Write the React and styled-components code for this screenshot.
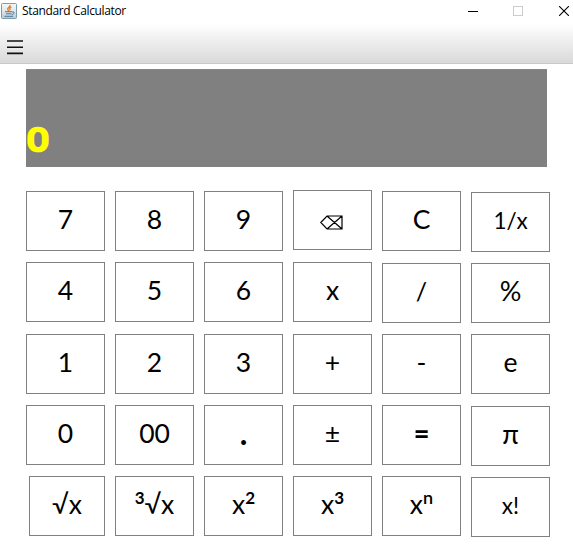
import React from "react";
import styled, { createGlobalStyle } from "styled-components";

const GlobalStyle = createGlobalStyle`
  * { box-sizing: border-box; }
  body { margin: 0; background: #fff; overflow: hidden; }
`;

const Window = styled.main`
  display: flex;
  flex-direction: column;
  width: 573px;
  height: 556px;
  background: #fff;
  color: #000;
  font-family: Lato, sans-serif;
`;

const TitleBar = styled.header`
  display: flex;
  align-items: center;
  height: 24px;
  padding: 0 4px 2px 1px;
`;

const Title = styled.h1`
  flex: 1;
  margin: 0 0 0 5px;
  font: 400 12px/18px "Open Sans", sans-serif;
  letter-spacing: -0.36px;
`;

const WindowControls = styled.div`
  display: flex;
  gap: 35px;
`;

const WindowControl = styled.button`
  display: flex;
  width: 10px;
  height: 10px;
  padding: 0;
  border: 0;
  background: none;

  &:last-child { margin-left: 1px; }
`;

const Toolbar = styled.nav`
  display: flex;
  align-items: flex-start;
  height: 40px;
  padding: 16px 0 0 7px;
  background: linear-gradient(#fff, #dadada 38px);
  border-bottom: 1px solid #c8c8c8;
`;

const MenuButton = styled.button`
  display: flex;
  padding: 0;
  border: 0;
  background: none;
`;

const Display = styled.output`
  display: flex;
  align-items: flex-end;
  width: 521px;
  height: 98px;
  margin: 5px 0 0 26px;
  background: #808080;
  border-top: 1px solid #7b8794;
`;

const Value = styled.span`
  height: 44px;
  padding-left: 1.5px;
  color: #ff0;
  font: 100 29px/34px Roboto, sans-serif;
  -webkit-text-stroke: 4.6px #ff0;
  transform: scaleX(1.25);
  transform-origin: left;
`;

const Keypad = styled.section`
  display: grid;
  grid-template-columns: repeat(6, 79px);
  grid-template-rows: 71px 72px 71px 71px 61px;
  column-gap: 10px;
  margin: 24px 0 0 26px;
`;

const Key = styled.button`
  display: flex;
  align-items: center;
  justify-content: center;
  height: 60px;
  margin: ${({ $drop = 0 }) => $drop}px 0 0 ${({ $inset = 0 }) => $inset}px;
  padding: 0 0 4px;
  border: 1px solid #808080;
  background: #fff;
  color: #000;
  font: ${({ $weight = 400 }) => $weight} ${({ $size = 26.5 }) => $size}px/32px Lato, "Open Sans", sans-serif;
`;

const KeyLabel = styled.span`
  display: flex;
  white-space: pre;
  transform: translate(${({ $x = 0 }) => $x}px, ${({ $y = 0 }) => $y}px);
`;

const Power = styled.span`
  font-size: ${({ $size = 17 }) => $size}px;
  font-weight: ${({ $weight = 700 }) => $weight};
  line-height: ${({ $line = 19 }) => $line}px;
`;

const JavaIcon = () => (
  <svg width="16" height="16" viewBox="0 0 16 16" fill="none">
    <defs>
      <linearGradient id="javaTile" x2="0" y2="1">
        <stop stopColor="#f5f7f8" />
        <stop offset=".5" stopColor="#dfe8ee" />
        <stop offset="1" stopColor="#b4c8d5" />
      </linearGradient>
    </defs>
    <rect x=".5" y=".5" width="15" height="15" rx="1" fill="url(#javaTile)" stroke="#7e9bac" />
    <path d="M9 2c1 2-3 2.5-2.3 4.3L8 8.2M10.3 4C7.9 5 8.2 5.7 9.4 7" stroke="#e8811c" strokeWidth="1.4" />
    <path d="M4 8.7h7.2M5 10.8h5.5M3.5 13.3h8.5M11.3 9c3-.5 2.2 2-.4 2.5" stroke="#4f7693" />
  </svg>
);

const BackspaceIcon = () => (
  <svg width="23" height="15" viewBox="0 0 23 15" fill="none" stroke="#000" strokeWidth="1.2">
    <path d="M.8 7.5 7 1h15v13H7L.8 7.5ZM7 1l15 13M7 14 22 1" />
  </svg>
);

const keys = [
  { id: "7" }, { id: "8" }, { id: "9" },
  { id: "backspace", label: <BackspaceIcon />, drop: -1, y: 4, x: -1 },
  { id: "C" }, { id: "1/x", drop: 1, size: 22.5, y: 1 },
  { id: "4" }, { id: "5" }, { id: "6" }, { id: "x" },
  { id: "/", drop: 1, size: 25 }, { id: "%", drop: 1, size: 27 },
  { id: "1" }, { id: "2" }, { id: "3" }, { id: "+" }, { id: "-" }, { id: "e" },
  { id: "0" }, { id: "00" }, { id: ".", weight: 700, size: 32 }, { id: "±" },
  { id: "=", weight: 900, size: 27 }, { id: "π", drop: 1, size: 27 },
  { id: "√x", inset: 3 },
  { id: "³√x", label: <><Power>3</Power>√x</> },
  { id: "x²", label: <>x<Power>2</Power></> },
  { id: "x³", label: <>x<Power>3</Power></> },
  { id: "xⁿ", label: <>x<Power $weight={600} $size={18} $line={19}>n</Power></> },
  { id: "x!", drop: 1, size: 22.5, y: 1 },
];

export default function App() {
  return (
    <Window>
      <GlobalStyle />
      <TitleBar>
        <JavaIcon />
        <Title>Standard Calculator</Title>
        <WindowControls>
          <WindowControl aria-label="Minimize">
            <svg width="10" height="10"><path d="M0 5.5h10" stroke="#000" /></svg>
          </WindowControl>
          <WindowControl aria-label="Maximize">
            <svg width="10" height="10"><rect x=".5" y=".5" width="9" height="9" fill="none" stroke="#ccc" /></svg>
          </WindowControl>
          <WindowControl aria-label="Close">
            <svg width="10" height="10"><path d="m0 0 10 10M10 0 0 10" stroke="#000" strokeWidth="1.1" /></svg>
          </WindowControl>
        </WindowControls>
      </TitleBar>
      <Toolbar>
        <MenuButton aria-label="Menu">
          <svg width="16" height="15"><path d="M0 1h16M0 7.3h16M0 13.4h16" stroke="#111" strokeWidth="1.6" /></svg>
        </MenuButton>
      </Toolbar>
      <Display><Value>0</Value></Display>
      <Keypad>
        {keys.map(({ id, label, drop, inset, size, weight, x, y }) => (
          <Key key={id} $drop={drop} $inset={inset} $size={size} $weight={weight}>
            <KeyLabel $x={x} $y={y}>{label || id}</KeyLabel>
          </Key>
        ))}
      </Keypad>
    </Window>
  );
}
